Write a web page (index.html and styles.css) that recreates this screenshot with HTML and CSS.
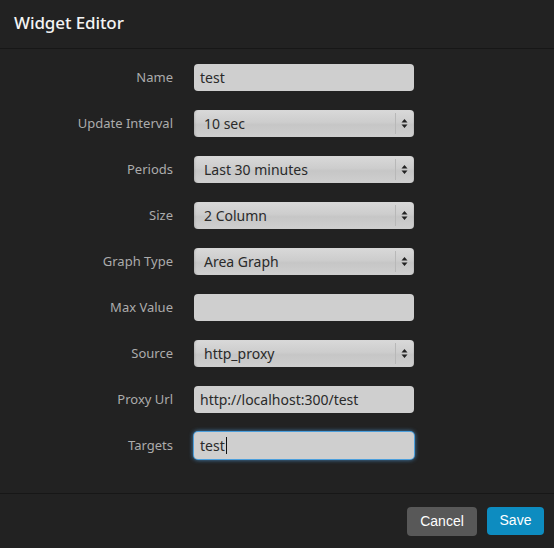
FILE: index.html
```html
<!DOCTYPE html>
<html>
<head>
<meta charset="utf-8">
<link rel="stylesheet" href="styles.css">
</head>
<body>
<div class="modal">
  <div class="modal-header"><h3>Widget Editor</h3></div>
  <form class="modal-body">
    <div class="row"><label>Name</label><div class="field input">test</div></div>
    <div class="row"><label>Update Interval</label><div class="field select"><span>10 sec</span><span class="sep"></span><svg class="arrows" width="7" height="11" viewBox="0 0 7 11"><path d="M3.5 1 L6.5 4.5 H0.5 Z M3.5 10 L6.5 6.5 H0.5 Z" fill="#222"/></svg></div></div>
    <div class="row"><label>Periods</label><div class="field select"><span>Last 30 minutes</span><span class="sep"></span><svg class="arrows" width="7" height="11" viewBox="0 0 7 11"><path d="M3.5 1 L6.5 4.5 H0.5 Z M3.5 10 L6.5 6.5 H0.5 Z" fill="#222"/></svg></div></div>
    <div class="row"><label>Size</label><div class="field select"><span>2 Column</span><span class="sep"></span><svg class="arrows" width="7" height="11" viewBox="0 0 7 11"><path d="M3.5 1 L6.5 4.5 H0.5 Z M3.5 10 L6.5 6.5 H0.5 Z" fill="#222"/></svg></div></div>
    <div class="row"><label>Graph Type</label><div class="field select"><span>Area Graph</span><span class="sep"></span><svg class="arrows" width="7" height="11" viewBox="0 0 7 11"><path d="M3.5 1 L6.5 4.5 H0.5 Z M3.5 10 L6.5 6.5 H0.5 Z" fill="#222"/></svg></div></div>
    <div class="row"><label>Max Value</label><div class="field input"></div></div>
    <div class="row"><label>Source</label><div class="field select"><span>http_proxy</span><span class="sep"></span><svg class="arrows" width="7" height="11" viewBox="0 0 7 11"><path d="M3.5 1 L6.5 4.5 H0.5 Z M3.5 10 L6.5 6.5 H0.5 Z" fill="#222"/></svg></div></div>
    <div class="row"><label>Proxy Url</label><div class="field input">http://localhost:300/test</div></div>
    <div class="row"><label>Targets</label><div class="field input focus">test<span class="caret"></span></div></div>
  </form>
  <div class="modal-footer">
    <button class="btn cancel" type="button">Cancel</button>
    <button class="btn save" type="button">Save</button>
  </div>
</div>
</body>
</html>
```
FILE: styles.css
```css
html, body {
  margin: 0;
  padding: 0;
  background: #222222;
}
.modal {
  width: 554px;
  height: 548px;
  display: flex;
  flex-direction: column;
  background: #222222;
  font-family: "Noto Sans", "Noto Sans CJK JP", sans-serif;
}
.modal-header {
  height: 48px;
  border-bottom: 1px solid #171717;
  box-sizing: content-box;
  display: flex;
  align-items: center;
  padding-left: 14px;
  flex: none;
}
.modal-header h3 {
  margin: 0;
  margin-top: -3px;
  font-size: 17px;
  font-weight: 500;
  color: #f4f4f4;
  letter-spacing: -0.1px;
}
.modal-body {
  flex: 1;
  margin: 0;
  padding-top: 15px;
  display: flex;
  flex-direction: column;
  gap: 19px;
}
.row {
  display: flex;
  align-items: center;
  height: 27px;
}
.row label {
  width: 194px;
  text-align: right;
  padding-right: 21px;
  box-sizing: border-box;
  font-size: 13px;
  color: #acacac;
  margin-top: -1px;
}
.field {
  width: 220px;
  height: 27px;
  box-sizing: border-box;
  border-radius: 4px;
  font-size: 14px;
  color: #2a2a2a;
  display: flex;
  align-items: center;
  position: relative;
}
.input {
  background: #cfcfcf;
  padding-left: 6px;
}
.input.focus {
  box-shadow: 0 0 0 1px #4c9fdc, 0 0 4px 1px rgba(82, 168, 236, 0.7);
}
.caret {
  display: inline-block;
  width: 1px;
  height: 17px;
  background: #111;
  margin-left: 1px;
}
.select {
  background: linear-gradient(to bottom, #d9d9d9 0%, #cdcdcd 45%, #c6c6c6 55%, #cfcfcf 100%);
  padding-left: 10px;
  box-shadow: inset 2px 0 2px -1px rgba(0,0,0,0.12), inset -1px 0 0 rgba(0,0,0,0.05);
}
.select .sep {
  position: absolute;
  right: 18px;
  top: 3px;
  bottom: 3px;
  width: 1px;
  background: #b8b8b8;
}
.select .arrows {
  position: absolute;
  right: 6px;
  top: 8px;
}
.modal-footer {
  flex: none;
  height: 55px;
  border-top: 1px solid #171717;
  display: flex;
  justify-content: flex-end;
  align-items: flex-start;
  padding: 13px 10px 0 0;
  gap: 10px;
  box-sizing: border-box;
}
.btn {
  height: 29px;
  border: none;
  border-radius: 4px;
  color: #ffffff;
  font-family: "Liberation Sans", Arial, sans-serif;
  font-size: 14px;
  padding: 0 0 2px 0;
}
.cancel {
  width: 70px;
  background: #585858;
}
.save {
  width: 57px;
  height: 28px;
  background: #0d8cc0;
}
```
